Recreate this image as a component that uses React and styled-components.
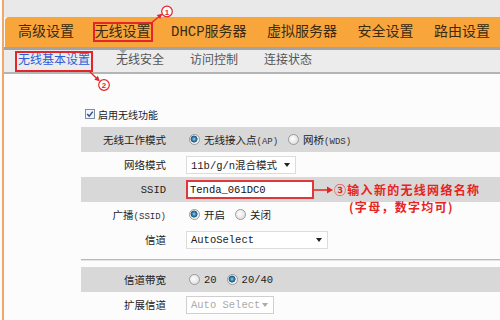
import React from "react";
import styled, { createGlobalStyle } from "styled-components";

const GlobalStyle = createGlobalStyle`
  html, body {
    margin: 0;
    padding: 0;
    background: #fcfcfc;
  }
  body {
    font-family: "Liberation Mono", "Noto Sans CJK SC", monospace;
    overflow: hidden;
  }
`;

const Frame = styled.div`
  position: relative;
  width: 496px;
  height: 320px;
  margin-left: 2px;
  border-left: 2px solid #f1a66c;
  background: #fcfcfc;
  overflow: hidden;
`;

const TopStrip = styled.div`
  height: 17px;
  background: #e9e9e9;
`;

const NavBar = styled.div`
  display: flex;
  align-items: stretch;
  gap: 20.5px;
  height: 30px;
  margin-left: 1px;
  padding-left: 13px;
  background: #f8a63c;
  border-top-left-radius: 4px;
`;

const NavItem = styled.div`
  position: relative;
  display: flex;
  align-items: center;
  font-size: 14px;
  color: #3a2a12;
  white-space: nowrap;

  ${(p) =>
    p.$active &&
    `
    &::after {
      content: "";
      position: absolute;
      top: 100%;
      left: 50%;
      margin-left: -6px;
      border-left: 6px solid transparent;
      border-right: 6px solid transparent;
      border-top: 7px solid #a3a3a3;
      z-index: 2;
    }
  `}
`;

const Boxed = styled.span`
  line-height: 16px;
  outline: ${(p) => (p.$boxed ? "2px solid #e2262b" : "none")};
  outline-offset: 0;
`;

const Band = styled.div`
  height: 3px;
  background: #a3a3a3;
`;

const SubNav = styled.div`
  display: flex;
  align-items: center;
  gap: 26px;
  height: 22px;
  padding-left: 14px;
  background: #ececec;
  border-bottom: 2px solid #b4b4b4;
`;

const SubItem = styled.span`
  font-size: 12px;
  line-height: 15px;
  color: ${(p) => (p.$active ? "#2c5ed8" : "#555")};
  outline: ${(p) => (p.$active ? "2px solid #e2262b" : "none")};
  outline-offset: 1px;
  white-space: nowrap;
`;

const Content = styled.div`
  padding: 32px 0 0 77px;
`;

const CheckRow = styled.label`
  display: flex;
  align-items: center;
  gap: 3px;
  height: 16px;
  margin: 0 0 5px 4px;
  font-size: 10px;
  color: #222;
`;

const FormRow = styled.div`
  display: grid;
  grid-template-columns: 105px 1fr;
  align-items: center;
  height: 25px;
  background: ${(p) => (p.$shaded ? "#d8d8d8" : "transparent")};
`;

const Label = styled.div`
  padding-right: 20px;
  text-align: right;
  font-size: 10.5px;
  color: #222;
  white-space: nowrap;
`;

const Value = styled.div`
  display: flex;
  align-items: center;
  gap: 10px;
  height: 100%;
  font-size: 10.5px;
  color: #222;
  white-space: nowrap;
`;

const Small = styled.span`
  font-size: 9px;
  color: #333;
`;

const Option = styled.span`
  display: flex;
  align-items: center;
  gap: 4px;
  &:first-child {
    margin-left: 3px;
  }
`;

const RadioDot = styled.span`
  width: 9px;
  height: 9px;
  border-radius: 50%;
  border: 1px solid #9a9a9a;
  background: ${(p) =>
    p.$checked
      ? "radial-gradient(circle at 45% 45%, #9ad3ee 0, #2f7aa8 2px, #1e5680 3.2px, #f4f4f4 3.8px)"
      : "radial-gradient(circle at 40% 40%, #ffffff 0, #e4e4e4 5px)"};
`;

const SelectBox = styled.div`
  display: flex;
  align-items: center;
  justify-content: space-between;
  box-sizing: border-box;
  width: ${(p) => p.$width}px;
  height: 18px;
  padding: 0 5px 0 4px;
  background: #fff;
  border: 1px solid ${(p) => (p.$disabled ? "#cfcfcf" : "#dcdcdc")};
  color: ${(p) => (p.$disabled ? "#aaa" : "#222")};
  font-size: 10.5px;
`;

const Caret = styled.span`
  width: 0;
  height: 0;
  border-left: 3.5px solid transparent;
  border-right: 3.5px solid transparent;
  border-top: 4px solid ${(p) => (p.$disabled ? "#aaa" : "#222")};
`;

const TextInput = styled.div`
  display: flex;
  align-items: center;
  box-sizing: border-box;
  width: 128px;
  height: 19px;
  padding-left: 2px;
  background: #fff;
  border: 2px solid #e0383a;
  font-size: 10.5px;
  color: #111;
`;

const NoteWrap = styled.div`
  display: flex;
  align-items: center;
  gap: 1px;
  margin-left: -10px;
`;

const Note = styled.div`
  height: 17.5px;
  font-family: "Noto Sans CJK SC", "Liberation Sans", sans-serif;
  font-weight: 700;
  font-size: 12px;
  letter-spacing: 1.3px;
  line-height: 17.5px;
  color: #e6231e;
  white-space: nowrap;
`;

const NoteLine = styled.div`
  height: 17.5px;
  margin-left: ${(p) => p.$indent || 0}px;
`;

const Separator = styled.div`
  height: 1px;
  margin: 7px 0 7px;
  background: #b8b8b8;
  box-shadow: 0 1px 0 #e4e4e4;
`;

const Overlay = styled.svg`
  position: absolute;
  inset: 0;
  pointer-events: none;
  z-index: 5;
`;

const Radio = ({ checked, children }) => (
  <Option>
    <RadioDot $checked={checked} />
    <span>{children}</span>
  </Option>
);

const Select = ({ width, disabled, children }) => (
  <SelectBox $width={width} $disabled={disabled}>
    <span>{children}</span>
    <Caret $disabled={disabled} />
  </SelectBox>
);

const Marker = ({ cx, cy, n, x1, y1, x2, y2 }) => {
  const angle = (Math.atan2(y2 - y1, x2 - x1) * 180) / Math.PI;
  return (
    <g>
      <line x1={x1} y1={y1} x2={x2} y2={y2} stroke="#e2262b" strokeWidth="1.3" />
      <polygon
        points={`${x2 + 1},${y2} ${x2 - 4},${y2 - 2.6} ${x2 - 4},${y2 + 2.6}`}
        transform={`rotate(${angle} ${x2} ${y2})`}
        fill="#e2262b"
      />
      <circle cx={cx} cy={cy} r="5.3" fill="#fff" stroke="#e2262b" strokeWidth="1.2" />
      <text
        x={cx}
        y={cy + 3}
        textAnchor="middle"
        fontSize="8"
        fontWeight="700"
        fill="#e2262b"
        fontFamily="Liberation Sans, sans-serif"
      >
        {n}
      </text>
    </g>
  );
};

const navItems = ["高级设置", "无线设置", "DHCP服务器", "虚拟服务器", "安全设置", "路由设置"];
const subItems = ["无线基本设置", "无线安全", "访问控制", "连接状态"];

export default function App() {
  return (
    <>
      <GlobalStyle />
      <Frame>
        <TopStrip />
        <NavBar>
          {navItems.map((item, i) => (
            <NavItem key={item} $active={i === 1}>
              <Boxed $boxed={i === 1}>{item}</Boxed>
            </NavItem>
          ))}
        </NavBar>
        <Band />
        <SubNav>
          {subItems.map((item, i) => (
            <SubItem key={item} $active={i === 0}>
              {item}
            </SubItem>
          ))}
        </SubNav>

        <Content>
          <CheckRow>
            <svg width="10" height="10" viewBox="0 0 10 10">
              <rect x="0.5" y="0.5" width="9" height="9" fill="#f2f6fb" stroke="#7b8ea3" />
              <polyline points="2.2,5 4.2,7.2 7.8,2.6" fill="none" stroke="#2a4f9a" strokeWidth="1.5" />
            </svg>
            <span>启用无线功能</span>
          </CheckRow>

          <FormRow $shaded>
            <Label>无线工作模式</Label>
            <Value>
              <Radio checked>
                无线接入点<Small>(AP)</Small>
              </Radio>
              <Radio>
                网桥<Small>(WDS)</Small>
              </Radio>
            </Value>
          </FormRow>

          <FormRow>
            <Label>网络模式</Label>
            <Value>
              <Select width={110}>11b/g/n混合模式</Select>
            </Value>
          </FormRow>

          <FormRow $shaded>
            <Label>SSID</Label>
            <Value>
              <TextInput>Tenda_061DC0</TextInput>
              <NoteWrap>
                <svg width="19" height="8" viewBox="0 0 19 8">
                  <line x1="0" y1="4" x2="14" y2="4" stroke="#e6231e" strokeWidth="1.5" />
                  <polygon points="13,0.5 19,4 13,7.5" fill="#e6231e" />
                </svg>
                <Note>
                  <NoteLine>③输入新的无线网络名称</NoteLine>
                  <NoteLine $indent={15}>(字母，数字均可)</NoteLine>
                </Note>
              </NoteWrap>
            </Value>
          </FormRow>

          <FormRow>
            <Label>
              广播<Small>(SSID)</Small>
            </Label>
            <Value>
              <Radio checked>开启</Radio>
              <Radio>关闭</Radio>
            </Value>
          </FormRow>

          <FormRow>
            <Label>信道</Label>
            <Value>
              <Select width={142}>AutoSelect</Select>
            </Value>
          </FormRow>

          <Separator />

          <FormRow $shaded>
            <Label>信道带宽</Label>
            <Value>
              <Radio>20</Radio>
              <Radio checked>20/40</Radio>
            </Value>
          </FormRow>

          <FormRow>
            <Label>扩展信道</Label>
            <Value>
              <Select width={88} disabled>
                Auto Select
              </Select>
            </Value>
          </FormRow>
        </Content>

        <Overlay width="496" height="320" viewBox="0 0 496 320">
          <Marker cx={163} cy={11.5} n="1" x1={146} y1={24} x2={157.5} y2={14.5} />
          <Marker cx={100} cy={85} n="2" x1={85} y1={71} x2={95} y2={80.5} />
        </Overlay>
      </Frame>
    </>
  );
}
